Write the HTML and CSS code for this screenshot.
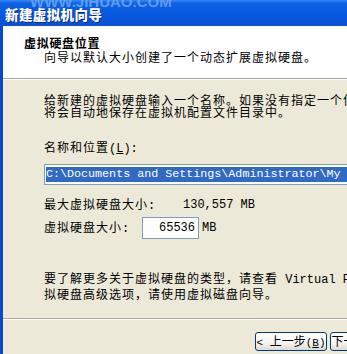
FILE: index.html
```html
<!DOCTYPE html>
<html lang="zh-CN">
<head>
<meta charset="utf-8">
<title>新建虚拟机向导</title>
<link rel="stylesheet" href="styles.css">
</head>
<body>
<div class="window">
  <div class="titlebar">
    <span class="watermark">WWW.JIHUAO.COM</span>
    <span class="title">新建虚拟机向导</span>
  </div>
  <div class="frame">
    <div class="header">
      <div class="h-title">虚拟硬盘位置</div>
      <div class="h-sub">向导以默认大小创建了一个动态扩展虚拟硬盘。</div>
    </div>
    <div class="content">
      <p class="para">给新建的虚拟硬盘输入一个名称。如果没有指定一个位置，虚拟硬盘<br>将会自动地保存在虚拟机配置文件目录中。</p>
      <div class="label">名称和位置<span class="lat">(<u>L</u>):</span></div>
      <div class="path-input"><span class="sel">C:\Documents and Settings\Administrator\My Documents\My Virtual Machines</span></div>
      <div class="row row-max">
        <span class="row-label wide">最大虚拟硬盘大小<span class="lat">:</span></span>
        <span class="lat">130,557 MB</span>
      </div>
      <div class="row row-size">
        <span class="row-label">虚拟硬盘大小<span class="lat">:</span></span>
        <span class="size-input lat">65536</span>
        <span class="lat unit">MB</span>
      </div>
      <p class="para2">要了解更多关于虚拟硬盘的类型，请查看<span class="lat"> Virtual PC </span>帮助。要设置虚<br>拟硬盘高级选项，请使用虚拟磁盘向导。</p>
    </div>
    <div class="footer">
      <button class="btn"><span class="blat">&lt; </span>上一步<span class="blat">(<u>B</u>)</span></button>
      <button class="btn">下一步<span class="blat">(<u>N</u>) &gt;</span></button>
    </div>
  </div>
</div>
</body>
</html>
```
FILE: styles.css
```css
html, body {
  margin: 0;
  padding: 0;
  overflow: hidden;
  background: #ece9d8;
}

.window {
  width: 347px;
  height: 354px;
  overflow: hidden;
  display: flex;
  flex-direction: column;
  font-family: "Noto Sans CJK SC", "Liberation Mono", sans-serif;
  font-size: 12px;
  line-height: 12px;
  letter-spacing: 1px;
  color: #000;
  white-space: nowrap;
}

.lat {
  font-family: "Liberation Mono", monospace;
  letter-spacing: 0;
}

.titlebar {
  position: relative;
  height: 26px;
  flex: none;
  background: linear-gradient(#3a88f2 0, #0d62e4 12%, #0758de 55%, #0a52d6 100%);
  display: flex;
  align-items: center;
  padding-left: 5px;
  overflow: hidden;
}

.title {
  color: #fff;
  font-weight: 900;
  font-size: 13.5px;
  line-height: 14px;
  letter-spacing: 0.4px;
  text-shadow: 1px 1px 0 #0a2a80;
  position: relative;
  top: 1px;
}

.watermark {
  position: absolute;
  left: 30px;
  top: -6px;
  font-family: "Liberation Sans", sans-serif;
  font-weight: bold;
  font-size: 15px;
  line-height: 16px;
  letter-spacing: 0;
  color: #7aaef0;
  opacity: 0.75;
}

.frame {
  flex: 1;
  display: flex;
  flex-direction: column;
  border-left: 3px solid #0a48cc;
  min-height: 0;
}

.header {
  background: #fff;
  height: 41px;
  padding: 11px 0 0 21px;
  border-bottom: 1px solid #aca899;
  flex: none;
}

.h-title {
  font-weight: bold;
  letter-spacing: 0.7px;
}

.h-sub {
  margin-top: 2px;
  padding-left: 20px;
}

.content {
  flex: 1;
  border-top: 1px solid #fff;
  padding: 14px 0 0 41px;
  min-height: 0;
}

.para {
  margin: 0;
}

.label {
  margin-top: 23px;
}

.label u, .btn u {
  text-decoration: underline;
}

.path-input {
  margin-top: 9px;
  height: 15px;
  padding: 2px 0 2px 1px;
  border: 1px solid #7f9db9;
  background: #fff;
  width: 400px;
  font-family: "Liberation Mono", monospace;
  font-size: 11.7px;
  line-height: 15px;
  letter-spacing: 0;
}

.sel {
  background: #316ac5;
  color: #fff;
  display: inline-block;
}

.row {
  display: flex;
  align-items: center;
}

.row-max {
  margin-top: 13px;
}

.row-size {
  margin-top: 5px;
  height: 22px;
}

.row-label {
  width: 98px;
  flex: none;
}

.row-label.wide {
  width: 139px;
}

.size-input {
  box-sizing: border-box;
  width: 57px;
  height: 22px;
  border: 1px solid #7f9db9;
  background: #fff;
  text-align: right;
  padding-right: 3px;
  line-height: 20px;
}

.unit {
  margin-left: 3px;
}

.para2 {
  margin: 32px 0 0 0;
  line-height: 13px;
}

.footer {
  flex: none;
  height: 36px;
  border-top: 1px solid #aca899;
  box-shadow: inset 0 1px 0 #fff;
  display: flex;
  align-items: flex-start;
  gap: 3px;
  padding-left: 252px;
  box-sizing: border-box;
}

.btn {
  margin-top: 13px;
  width: 72px;
  height: 19px;
  flex: none;
  padding: 0;
  border: 1px solid #003c74;
  border-radius: 3px;
  background: linear-gradient(#ffffff 0, #f4f4f0 60%, #dcdad0 100%);
  font-family: "Noto Sans CJK SC", sans-serif;
  font-size: 12px;
  line-height: 15px;
  letter-spacing: 0;
  color: #000;
  white-space: nowrap;
  overflow: hidden;
  text-align: center;
}

.blat {
  font-family: "Liberation Mono", monospace;
  font-size: 11px;
  letter-spacing: 0;
}
```
